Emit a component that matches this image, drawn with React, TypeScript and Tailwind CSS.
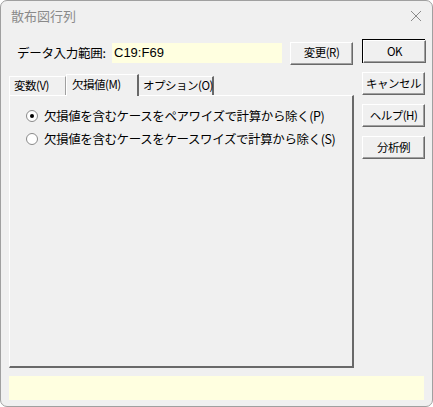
export default function App() {
  const font = { fontFamily: '"Noto Sans CJK JP", sans-serif' };
  const btn = "h-[23px] w-[63px] shrink-0 whitespace-nowrap bg-[#f0f0f0] border border-t-white border-l-white border-r-[#696969] border-b-[#696969] shadow-[inset_-1px_-1px_0_#a0a0a0] text-[11.5px] tracking-[-0.5px] text-black flex items-center justify-center";
  return (
    <div style={font} className="w-[433px] h-[407px] bg-[#f0f0f0] border border-[#a0a0a0] rounded-[7px] overflow-hidden flex flex-col text-[12px] text-black whitespace-nowrap">
      <div className="h-[30px] flex items-center justify-between pl-[10px] pr-[10px]">
        <span className="text-[13px] text-[#8a8a8a]">散布図行列</span>
        <svg width="12" height="12" viewBox="0 0 12 12"><path d="M1 1L11 11M11 1L1 11" stroke="#8a8a8a" strokeWidth="1" /></svg>
      </div>
      <div className="flex pl-[8px] pt-[8px]">
        <div className="w-[345px] shrink-0 flex flex-col">
          <div className="flex items-center h-[24px] mt-[2px]">
            <span className="w-[103px] shrink-0 pl-[8px] text-[12.5px] tracking-[-0.3px]">データ入力範囲:</span>
            <div className="w-[170px] shrink-0 h-[20px] bg-[#ffffe0] flex items-center pl-[2px] text-[13px]" style={{ fontFamily: '"Liberation Sans", sans-serif' }}>C19:F69</div>
            <div className="ml-[8px]"><div className={btn}>変更(R)</div></div>
          </div>
          <div className="flex items-end h-[27px] mt-[3px] text-[11.5px] tracking-[-0.5px]">
            <div className="h-[19px] px-[4px] flex items-center border-t border-l border-white border-r border-r-[#a0a0a0] w-[57px] shrink-0">変数(V)</div>
            <div className="h-[22px] px-[5px] flex items-start pt-[1px] border-t border-l border-white border-r-2 border-r-[#696969] w-[73px] shrink-0 -mb-[1px] bg-[#f0f0f0] relative z-10">欠損値(M)</div>
            <div className="h-[19px] px-[4px] flex items-center border-t border-white border-r-2 border-r-[#696969] w-[75px] shrink-0">オプション(O)</div>
          </div>
          <div className="h-[273px] border-t border-l border-white border-r-2 border-b-2 border-r-[#696969] border-b-[#696969] pt-[13px] pl-[16px] flex flex-col gap-[9px]">
            {["欠損値を含むケースをペアワイズで計算から除く(P)", "欠損値を含むケースをケースワイズで計算から除く(S)"].map((t, i) => (
              <div key={i} className="flex items-center h-[14px]">
                <div className="w-[12px] h-[12px] shrink-0 rounded-full border border-[#8a8a8a] bg-white flex items-center justify-center mr-[6px]">
                  {i === 0 && <div className="w-[4px] h-[4px] rounded-full bg-black" />}
                </div>
                <span className="text-[12.5px] tracking-[-0.4px]">{t}</span>
              </div>
            ))}
          </div>
        </div>
        <div className="ml-[8px] flex flex-col gap-[9px]">
          <div className="h-[24px] w-[63px] border border-black flex"><div className={btn + " h-[22px] w-[61px]"}>OK</div></div>
          <div className={btn}>キャンセル</div>
          <div className={btn}>ヘルプ(H)</div>
          <div className={btn}>分析例</div>
        </div>
      </div>
      <div className="mx-[8px] mt-[8px] h-[24px] bg-[#ffffe0]" />
    </div>
  );
}
